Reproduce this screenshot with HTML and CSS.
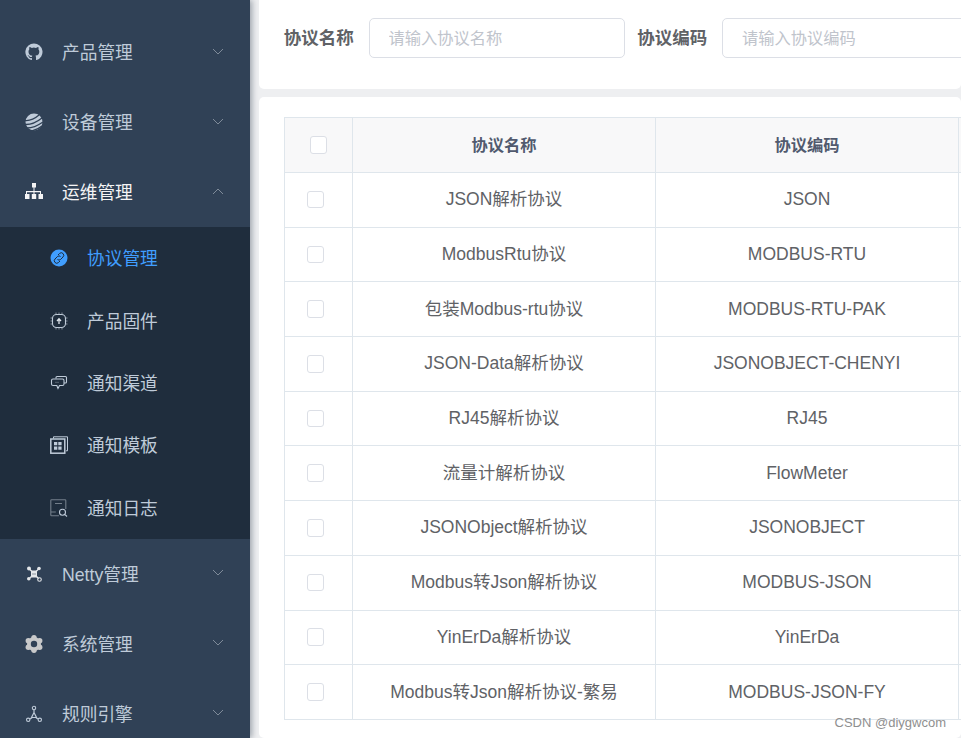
FILE: index.html
```html
<!DOCTYPE html>
<html lang="zh-CN">
<head>
  <meta charset="UTF-8">
  <title>协议管理</title>
  <link rel="stylesheet" href="styles.css">
</head>
<body>
  <div class="app">

    <!-- 侧边栏 -->
    <aside class="sidebar">
      <div class="menu-item">
        <svg class="icon" viewBox="0 0 18 18"><path fill="#bfcbd9" fill-rule="evenodd" d="M9 .5a8.5 8.5 0 0 0-2.7 16.6c.4.1.6-.2.6-.4v-1.600c-2.400.5-2.900-1-2.900-1-.4-1-.9-1.300-.9-1.300-.8-.5 0-.5 0-.5.800.1 1.300.9 1.300.9.800 1.300 2 .9 2.500.7.100-.600.300-.900.500-1.100-1.900-.2-3.900-1-3.900-4.200 0-.9.300-1.700.9-2.300-.1-.2-.4-1.100.1-2.300 0 0 .7-.2 2.300.9a8 8 0 0 1 4.200 0c1.600-1.100 2.300-.9 2.300-.9.500 1.200.2 2.100.1 2.300.5.600.9 1.400.9 2.300 0 3.200-2 4-3.900 4.200.3.300.6.800.6 1.600v2.300c0 .2.100.5.600.4A8.500 8.500 0 0 0 9 .5z"/></svg>
        <span class="menu-title">产品管理</span>
        <svg class="arrow" viewBox="0 0 12 7"><path d="M1 1l5 5 5-5"/></svg>
      </div>
      <div class="menu-item">
        <svg class="icon" viewBox="0 0 18 18"><circle cx="9" cy="9" r="8.500" fill="#bfcbd9"/><path d="M0 7.500C5 8 10 5.500 14 2M0 11.500C6 11.800 12 9 17 5M2 15C8 15 13 12.500 18 9M7 17.800C11 17 14 15.500 17 13" fill="none" stroke="#304156" stroke-width="1.300"/></svg>
        <span class="menu-title">设备管理</span>
        <svg class="arrow" viewBox="0 0 12 7"><path d="M1 1l5 5 5-5"/></svg>
      </div>
      <div class="menu-item open">
        <svg class="icon" viewBox="0 0 18 18"><path fill="#f4f4f5" d="M7 0h4v4.500H9.500V8H16v3h2v5h-4.500v-5h1.500V9.200H9.500V11h1.700v5H6.800v-5h1.700V9.200H2V11h2.500v5H0v-5h1V8h7.500V4.500H7z"/></svg>
        <span class="menu-title">运维管理</span>
        <svg class="arrow" viewBox="0 0 12 7"><path d="M1 6l5-5 5 5"/></svg>
      </div>

      <div class="submenu">
        <div class="sub-item active">
          <svg class="icon" viewBox="0 0 18 18"><circle cx="9" cy="9" r="8.500" fill="#409eff"/><path d="M8 6l1.500-1.500a2.300 2.300 0 0 1 3.500 3.500l-2.500 2.500a2.300 2.300 0 0 1-3 0M10 12l-1.500 1.500a2.300 2.300 0 0 1-3.500-3.500l2.500-2.500a2.300 2.300 0 0 1 3 0" fill="none" stroke="#1f2d3d" stroke-width="1"/></svg>
          <span>协议管理</span>
        </div>
        <div class="sub-item">
          <svg class="icon" viewBox="0 0 18 18"><rect x="2.500" y="2.500" width="13" height="13" rx="4" fill="none" stroke="#bfcbd9" stroke-width="1.100"/><path d="M9 12V7M7 9l2-2.200L11 9" fill="none" stroke="#dfe5ec" stroke-width="1.300"/><path d="M6 .5v1.500M9 .5v1.500M12 .5v1.500M6 16v1.500M9 16v1.500M12 16v1.500M.5 6H2M.5 9H2M.5 12H2M16 6h1.500M16 9h1.500M16 12h1.500" stroke="#8f9aa6" stroke-width=".9"/></svg>
          <span>产品固件</span>
        </div>
        <div class="sub-item">
          <svg class="icon" viewBox="0 0 18 18"><path d="M6 4.500V3.500q0-1 1-1h8.500q1 0 1 1V8q0 1-1 1H14" fill="none" stroke="#bfcbd9" stroke-width="1.100"/><path d="M3 5h9.500q1.500 0 1.500 1.500V10q0 1.500-1.500 1.500h-3L8 14.500 6.800 11.500H3q-1.500 0-1.500-1.500V6.500Q1.500 5 3 5z" fill="none" stroke="#bfcbd9" stroke-width="1.100"/><path d="M5.500 8.300h4" stroke="#8f9aa6" stroke-width="1" stroke-dasharray="1 1"/></svg>
          <span>通知渠道</span>
        </div>
        <div class="sub-item">
          <svg class="icon" viewBox="0 0 18 18"><path d="M3.500 2.500V.8h14v14h-1.500" fill="none" stroke="#bfcbd9" stroke-width="1"/><rect x=".8" y="3" width="14" height="14.200" fill="none" stroke="#bfcbd9" stroke-width="1.500"/><path fill="#bfcbd9" d="M4 6h3.300v3.300H4zM8.300 6h3.300v3.300H8.300zM4 10.500h3.300v3.300H4zM8.300 10.500h3.300v3.300H8.300z"/></svg>
          <span>通知模板</span>
        </div>
        <div class="sub-item">
          <svg class="icon" viewBox="0 0 18 18"><path d="M9 16.800H1.500Q.8 16.800.8 16V1.500Q.8.800 1.500.8H15q.8 0 .8.800V10M.8 13h5M5 4.500h7" fill="none" stroke="#737e8a" stroke-width="1.100"/><circle cx="12.500" cy="13.300" r="3" fill="none" stroke="#bfcbd9" stroke-width="1.100"/><path d="M15 15.600l2 1.900" stroke="#bfcbd9" stroke-width="1.100"/></svg>
          <span>通知日志</span>
        </div>
      </div>

      <div class="menu-item">
        <svg class="icon" viewBox="0 0 18 18"><circle cx="4" cy="3.500" r="2" fill="#e4e7ea"/><circle cx="14" cy="3.500" r="1.800" fill="#e4e7ea"/><circle cx="3.800" cy="13.800" r="1.800" fill="#e4e7ea"/><circle cx="14.500" cy="14.500" r="1.800" fill="none" stroke="#e4e7ea" stroke-width="1.100"/><path fill="#e4e7ea" d="M6 5.500h6v7H6z"/><path d="M4 3.500l9.500 10M14 3.500l-10 10.300" stroke="#e4e7ea" stroke-width="1.200"/><path d="M7.500 9h3" stroke="#304156" stroke-width="1.200" stroke-dasharray="1 1"/></svg>
        <span class="menu-title">Netty管理</span>
        <svg class="arrow" viewBox="0 0 12 7"><path d="M1 1l5 5 5-5"/></svg>
      </div>
      <div class="menu-item">
        <svg class="icon" viewBox="0 0 18 18"><g fill="#c8c9ca"><circle cx="9" cy="9" r="7"/><circle cx="9" cy="2.800" r="2.700"/><circle cx="9" cy="15.200" r="2.700"/><circle cx="3.300" cy="5.800" r="2.700"/><circle cx="14.700" cy="5.800" r="2.700"/><circle cx="3.300" cy="12.200" r="2.700"/><circle cx="14.700" cy="12.200" r="2.700"/></g><circle cx="9" cy="9" r="3.200" fill="#304156"/></svg>
        <span class="menu-title">系统管理</span>
        <svg class="arrow" viewBox="0 0 12 7"><path d="M1 1l5 5 5-5"/></svg>
      </div>
      <div class="menu-item">
        <svg class="icon" viewBox="0 0 18 18"><circle cx="9" cy="3" r="1.700" fill="none" stroke="#bfcbd9" stroke-width="1.100"/><circle cx="3.200" cy="14.800" r="1.700" fill="none" stroke="#bfcbd9" stroke-width="1.100"/><circle cx="14.800" cy="14.800" r="1.700" fill="none" stroke="#bfcbd9" stroke-width="1.100"/><path d="M9 4.800v3M5 13.900l2-1.200M13 13.900l-2-1.200M9 7.500L6.500 12.500h5z" fill="none" stroke="#bfcbd9" stroke-width="1.200"/></svg>
        <span class="menu-title">规则引擎</span>
        <svg class="arrow" viewBox="0 0 12 7"><path d="M1 1l5 5 5-5"/></svg>
      </div>
    </aside>

    <!-- 主体 -->
    <main class="main">
      <div class="card search-card">
        <label class="form-label">协议名称</label>
        <input class="form-input" type="text" placeholder="请输入协议名称">
        <label class="form-label">协议编码</label>
        <input class="form-input" type="text" placeholder="请输入协议编码">
      </div>

      <div class="card table-card">
        <table class="data-table">
          <thead>
            <tr>
              <th class="col-check"><span class="checkbox head-box"></span></th>
              <th class="col-text">协议名称</th>
              <th class="col-text">协议编码</th>
              <th class="col-rest"></th>
            </tr>
          </thead>
          <tbody>
            <tr><td class="cell-check"><span class="checkbox"></span></td><td>JSON解析协议</td><td>JSON</td><td></td></tr>
            <tr><td class="cell-check"><span class="checkbox"></span></td><td>ModbusRtu协议</td><td>MODBUS-RTU</td><td></td></tr>
            <tr><td class="cell-check"><span class="checkbox"></span></td><td>包装Modbus-rtu协议</td><td>MODBUS-RTU-PAK</td><td></td></tr>
            <tr><td class="cell-check"><span class="checkbox"></span></td><td>JSON-Data解析协议</td><td>JSONOBJECT-CHENYI</td><td></td></tr>
            <tr><td class="cell-check"><span class="checkbox"></span></td><td>RJ45解析协议</td><td>RJ45</td><td></td></tr>
            <tr><td class="cell-check"><span class="checkbox"></span></td><td>流量计解析协议</td><td>FlowMeter</td><td></td></tr>
            <tr><td class="cell-check"><span class="checkbox"></span></td><td>JSONObject解析协议</td><td>JSONOBJECT</td><td></td></tr>
            <tr><td class="cell-check"><span class="checkbox"></span></td><td>Modbus转Json解析协议</td><td>MODBUS-JSON</td><td></td></tr>
            <tr><td class="cell-check"><span class="checkbox"></span></td><td>YinErDa解析协议</td><td>YinErDa</td><td></td></tr>
            <tr><td class="cell-check"><span class="checkbox"></span></td><td>Modbus转Json解析协议-繁易</td><td>MODBUS-JSON-FY</td><td></td></tr>
          </tbody>
        </table>
        <div class="watermark">CSDN @diygwcom</div>
      </div>
    </main>

  </div>
</body>
</html>
```

FILE: styles.css
```css
* {
  box-sizing: border-box;
}
html, body {
  margin: 0;
  height: 100%;
  overflow: hidden;
}
body {
  font-family: "Liberation Sans", "Noto Sans CJK SC", sans-serif;
  color: #606266;
  background: #eeeff1;
}
.app {
  display: flex;
  height: 738px;
}
.sidebar {
  flex: 0 0 250px;
  padding-top: 17px;
  background: #304156;
  box-shadow: 2px 0 6px rgba(0, 21, 41, 0.35);
  position: relative;
  z-index: 1;
  font-size: 17.7px;
  line-height: 22px;
}
.menu-item {
  display: flex;
  align-items: center;
  height: 70px;
  padding-left: 25px;
  color: #bfcbd9;
}
.menu-item.open {
  color: #f4f4f5;
}
.icon {
  flex: none;
  width: 18px;
  height: 18px;
}
.menu-title {
  margin-left: 19px;
  margin-top: 2px;
}
.arrow {
  width: 12px;
  height: 7px;
  margin-left: auto;
  margin-right: 26px;
  margin-bottom: 2px;
  fill: none;
  stroke: #7f8b99;
  stroke-width: 1;
}
.submenu {
  background: #1f2d3d;
}
.sub-item {
  display: flex;
  align-items: center;
  gap: 19px;
  height: 62.4px;
  padding-left: 50px;
  color: #bfcbd9;
}
.sub-item span {
  margin-top: 2px;
}
.sub-item.active {
  color: #409eff;
}
.main {
  flex: 1;
  min-width: 0;
  padding-left: 9px;
}
.card {
  background: #fff;
  border-radius: 5px;
}
.search-card {
  display: flex;
  align-items: flex-start;
  height: 89px;
  padding: 18px 0 0 24.75px;
  border-radius: 0 0 5px 5px;
}
.form-label {
  flex: none;
  width: 85px;
  line-height: 40px;
  font-size: 17.5px;
  font-weight: bold;
}
.form-input {
  flex: none;
  width: 256px;
  height: 40px;
  margin-right: 12.5px;
  padding: 0 18.75px;
  border: 1px solid #dcdfe6;
  border-radius: 5px;
  font-family: inherit;
  font-size: 16.25px;
  outline: none;
}
.form-input::placeholder {
  color: #c0c4cc;
}
.table-card {
  position: relative;
  height: 641px;
  margin-top: 8px;
  padding: 20px 0 0 25px;
  overflow: hidden;
}
.data-table {
  width: 900px;
  table-layout: fixed;
  border-collapse: collapse;
  font-size: 17.5px;
  line-height: 22px;
}
.data-table th,
.data-table td {
  height: 54.7px;
  padding: 0 0 1px;
  border: 1px solid #dfe6ec;
  text-align: center;
  font-weight: normal;
}
.data-table th {
  height: 55px;
  background: #f8f8f9;
  color: #515a6e;
  font-size: 16.25px;
  font-weight: bold;
}
.col-check {
  width: 68px;
}
.col-text {
  width: 303px;
}
.data-table .col-check,
.data-table .cell-check {
  padding-bottom: 3px;
}
.data-table .cell-check {
  padding-right: 6px;
}
.checkbox {
  display: inline-block;
  width: 17.5px;
  height: 17.5px;
  vertical-align: middle;
  background: #fff;
  border: 1px solid #dcdfe6;
  border-radius: 3px;
}
.head-box {
  width: 16.5px;
  height: 17.5px;
}
.watermark {
  position: absolute;
  right: 15px;
  bottom: 7px;
  font-size: 13px;
  line-height: 16px;
  color: #8f8f8f;
}
```
